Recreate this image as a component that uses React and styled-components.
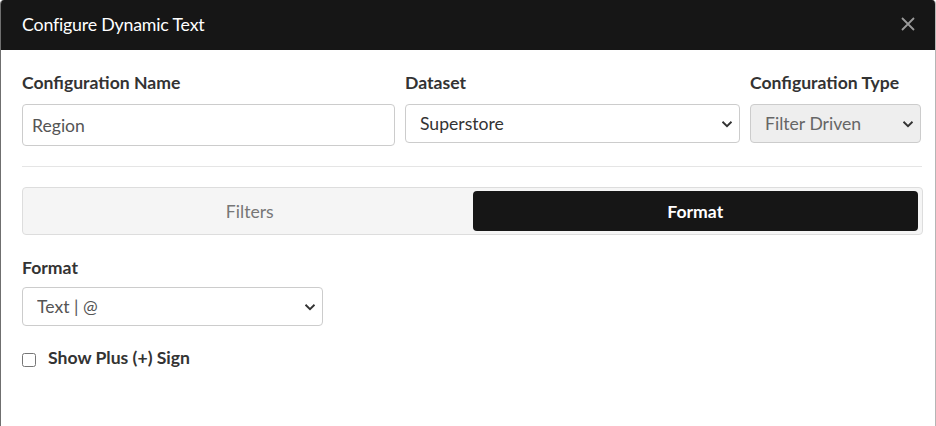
import React from "react";
import styled, { createGlobalStyle } from "styled-components";

const Global = createGlobalStyle`
  html, body { margin: 0; padding: 0; background: #ffffff; }
  body { font-family: Lato, "Noto Sans", "Liberation Sans", sans-serif; }
  * { box-sizing: border-box; }
`;

const Modal = styled.div`
  width: 936px;
  height: 426px;
  background: #fff;
  border-left: 1px solid #6f6f6f;
  border-right: 1px solid #b5b5b5;
  border-top-left-radius: 4px;
  border-top-right-radius: 4px;
  overflow: hidden;
  display: flex;
  flex-direction: column;
`;

const Header = styled.div`
  height: 50px;
  background: #161616;
  display: flex;
  align-items: center;
  justify-content: space-between;
  padding: 0 19px 2px 21px;
`;

const Title = styled.h4`
  margin: 0;
  color: #fff;
  font-size: 17.8px;
  font-weight: 400;
  letter-spacing: -0.2px;
`;

const Close = styled.button`
  background: none;
  border: none;
  padding: 0;
  width: 16px;
  height: 16px;
  display: flex;
  align-items: center;
  justify-content: center;
  cursor: pointer;
`;

const Body = styled.div`
  padding: 21px 14px 0 21px;
  display: flex;
  flex-direction: column;
`;

const Row = styled.div`
  display: grid;
  grid-template-columns: 373px 335px 171px;
  column-gap: 10px;
`;

const Field = styled.div`
  display: flex;
  flex-direction: column;
`;

const Label = styled.label`
  font-size: 17.6px;
  font-weight: 700;
  color: #333;
  line-height: 24px;
  height: 24px;
  margin-bottom: ${(p) => p.$mb || 9}px;
`;

const Input = styled.input`
  height: ${(p) => p.$h || 41}px;
  border: 1px solid #cccccc;
  border-radius: 4px;
  padding: 0 9px;
  font-family: inherit;
  font-size: 17.6px;
  color: #555;
  outline: none;
  width: 100%;
`;

const Select = styled.select`
  height: 39px;
  width: ${(p) => p.$w || "100%"};
  border: 1px solid #cccccc;
  border-radius: 4px;
  padding: 0 12px 0 14px;
  font-family: inherit;
  font-size: 17.6px;
  color: ${(p) => (p.disabled ? "#666" : p.$muted ? "#555" : "#333")};
  background: ${(p) => (p.disabled ? "#eeeeee" : "#fff")};
  appearance: none;
  background-image: url("data:image/svg+xml;utf8,<svg xmlns='http://www.w3.org/2000/svg' width='12' height='8' viewBox='0 0 12 8'><path d='M1.5 1.8 L6 6.2 L10.5 1.8' fill='none' stroke='%23333' stroke-width='1.9'/></svg>");
  background-repeat: no-repeat;
  background-position: right 6px center;
  background-size: 12px 8px;
  outline: none;
  opacity: 1;
`;

const Divider = styled.hr`
  border: none;
  border-top: 1px solid #e5e5e5;
  margin: 20px 0 20px 0;
  width: 900px;
`;

const Tabs = styled.div`
  width: 901px;
  height: 48px;
  background: #f5f5f5;
  border: 1px solid #dddddd;
  border-radius: 4px;
  padding: 3px 4px 3px 4px;
  display: grid;
  grid-template-columns: 1fr 1fr;
  column-gap: 0px;
`;

const Tab = styled.button`
  border: none;
  border-radius: 4px;
  font-family: inherit;
  font-size: 17.6px;
  font-weight: ${(p) => (p.$active ? 700 : 400)};
  background: ${(p) => (p.$active ? "#161616" : "transparent")};
  color: ${(p) => (p.$active ? "#fff" : "#777")};
  cursor: pointer;
  padding: 0;
`;

const FormatSection = styled.div`
  margin-top: 21px;
  display: flex;
  flex-direction: column;
`;

const CheckRow = styled.label`
  display: flex;
  align-items: center;
  gap: 12px;
  margin-top: 21px;
  font-size: 17.6px;
  font-weight: 700;
  color: #333;
`;

const Check = styled.input`
  margin: 4px 0 0 0;
  width: 14px;
  height: 14px;
`;

export default function App() {
  return (
    <>
      <Global />
      <Modal>
        <Header>
          <Title>Configure Dynamic Text</Title>
          <Close aria-label="Close">
            <svg width="14" height="14" viewBox="0 0 14 14">
              <path d="M1 1 L13 13 M13 1 L1 13" stroke="#9a9a9a" strokeWidth="1.8" />
            </svg>
          </Close>
        </Header>
        <Body>
          <Row>
            <Field>
              <Label>Configuration Name</Label>
              <Input defaultValue="Region" $h={42} />
            </Field>
            <Field>
              <Label>Dataset</Label>
              <Select defaultValue="Superstore">
                <option>Superstore</option>
              </Select>
            </Field>
            <Field>
              <Label>Configuration Type</Label>
              <Select disabled defaultValue="Filter Driven">
                <option>Filter Driven</option>
              </Select>
            </Field>
          </Row>
          <Divider />
          <Tabs>
            <Tab>Filters</Tab>
            <Tab $active>Format</Tab>
          </Tabs>
          <FormatSection>
            <Label $mb={7}>Format</Label>
            <Select $w="301px" $muted defaultValue="Text | @">
              <option>Text | @</option>
            </Select>
          </FormatSection>
          <CheckRow>
            <Check type="checkbox" />
            Show Plus (+) Sign
          </CheckRow>
        </Body>
      </Modal>
    </>
  );
}
